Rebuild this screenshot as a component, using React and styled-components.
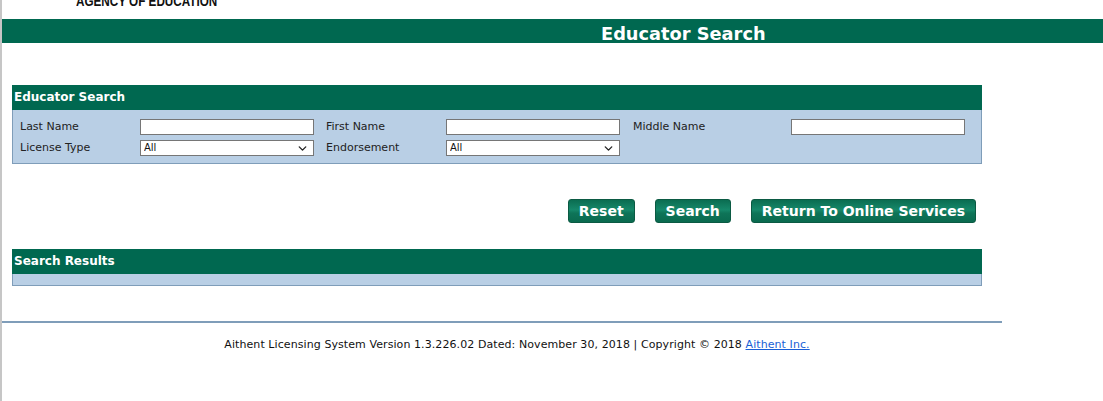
import React from "react";
import styled, { createGlobalStyle } from "styled-components";
import { ChevronDown } from "lucide-react";

const GlobalStyle = createGlobalStyle`
  html, body {
    margin: 0;
    padding: 0;
    background: #ffffff;
  }
  body {
    font-family: "DejaVu Sans", Verdana, sans-serif;
    color: #1b1b1b;
  }
`;

const Page = styled.div`
  min-height: 401px;
  border-left: 2px solid #c6c6c6;
  box-sizing: border-box;
  overflow: hidden;
`;

const Brand = styled.div`
  height: 19px;
  overflow: hidden;
  padding-left: 74px;
  span {
    display: block;
    margin-top: -8px;
    font-family: "Liberation Sans", Arial, sans-serif;
    font-weight: bold;
    font-size: 15px;
    transform: scaleX(0.78);
    transform-origin: left top;
    white-space: nowrap;
    color: #111;
  }
`;

const TitleBar = styled.div`
  height: 24px;
  background: #006850;
  color: #fff;
  font-weight: bold;
  font-size: 17.8px;
  line-height: 29px;
  padding-left: 599px;
  box-sizing: border-box;
`;

const Panel = styled.section`
  margin: ${(p) => p.$top}px 0 0 10px;
  width: 970px;
  box-sizing: border-box;
  border: 1px solid #7f9db9;
  border-top: none;
  background: #b9cfe5;
`;

const PanelHeader = styled.div`
  height: 25px;
  background: #006850;
  color: #fff;
  font-weight: bold;
  font-size: 12px;
  line-height: 25px;
  padding-left: 2px;
  margin: 0 -1px;
`;

const PanelBody = styled.div`
  min-height: ${(p) => p.$height || 0}px;
`;

const FormGrid = styled.div`
  display: grid;
  grid-template-columns: 120px 186px 120px 187px 158px 174px;
  grid-auto-rows: 21px;
  align-items: center;
  padding: 6px 0 5px 7px;
`;

const Label = styled.label`
  font-size: 11px;
  color: #222;
`;

const TextBox = styled.input`
  display: block;
  width: 174px;
  height: 16px;
  box-sizing: border-box;
  border: 1px solid #767676;
  background: #fff;
  padding: 0 2px;
  font-size: 11px;
  caret-color: #000;
  &:focus {
    outline: none;
  }
`;

const SelectWrap = styled.div`
  position: relative;
  width: 174px;
  height: 16px;
  svg {
    position: absolute;
    right: 5px;
    top: 2px;
    pointer-events: none;
    color: #222;
  }
`;

const Select = styled.select`
  display: block;
  width: 174px;
  height: 16px;
  box-sizing: border-box;
  border: 1px solid #767676;
  border-radius: 0;
  background: #fff;
  appearance: none;
  padding: 0 3px;
  font-family: "DejaVu Sans", sans-serif;
  font-size: 10px;
  color: #111;
`;

const ButtonRow = styled.div`
  display: flex;
  justify-content: flex-end;
  gap: 20px;
  width: 974px;
  margin-top: 35px;
`;

const Button = styled.button`
  height: 24px;
  padding: 0 10px;
  border: 1px solid #0b5a43;
  border-radius: 3px;
  background: linear-gradient(#0b6d51, #16886a 45%, #0e7458 60%, #0a6a4f);
  color: #fff;
  font-family: "DejaVu Sans", Verdana, sans-serif;
  font-weight: bold;
  font-size: 14px;
  line-height: 22px;
  cursor: pointer;
`;

const Rule = styled.hr`
  width: 1000px;
  margin: 35px 0 0;
  border: none;
  height: 2px;
  background: #7f9db9;
`;

const Footer = styled.footer`
  width: 1000px;
  padding: 15px 0 0 30px;
  box-sizing: border-box;
  text-align: center;
  font-size: 11px;
  letter-spacing: 0.08px;
  color: #111;
  a {
    color: #1a5fd6;
  }
`;

function Dropdown() {
  return (
    <SelectWrap>
      <Select defaultValue="All">
        <option>All</option>
      </Select>
      <ChevronDown size={13} strokeWidth={2.5} />
    </SelectWrap>
  );
}

export default function App() {
  return (
    <Page>
      <GlobalStyle />
      <Brand>
        <span>AGENCY OF EDUCATION</span>
      </Brand>
      <TitleBar>Educator Search</TitleBar>

      <Panel $top={42}>
        <PanelHeader>Educator Search</PanelHeader>
        <PanelBody>
          <FormGrid>
            <Label>Last Name</Label>
            <TextBox type="text" autoFocus />
            <Label>First Name</Label>
            <TextBox type="text" />
            <Label>Middle Name</Label>
            <TextBox type="text" />
            <Label>License Type</Label>
            <Dropdown />
            <Label>Endorsement</Label>
            <Dropdown />
          </FormGrid>
        </PanelBody>
      </Panel>

      <ButtonRow>
        <Button>Reset</Button>
        <Button>Search</Button>
        <Button>Return To Online Services</Button>
      </ButtonRow>

      <Panel $top={26}>
        <PanelHeader>Search Results</PanelHeader>
        <PanelBody $height={11} />
      </Panel>

      <Rule />
      <Footer>
        Aithent Licensing System Version 1.3.226.02 Dated: November 30, 2018 | Copyright © 2018{" "}
        <a href="#">Aithent Inc.</a>
      </Footer>
    </Page>
  );
}
